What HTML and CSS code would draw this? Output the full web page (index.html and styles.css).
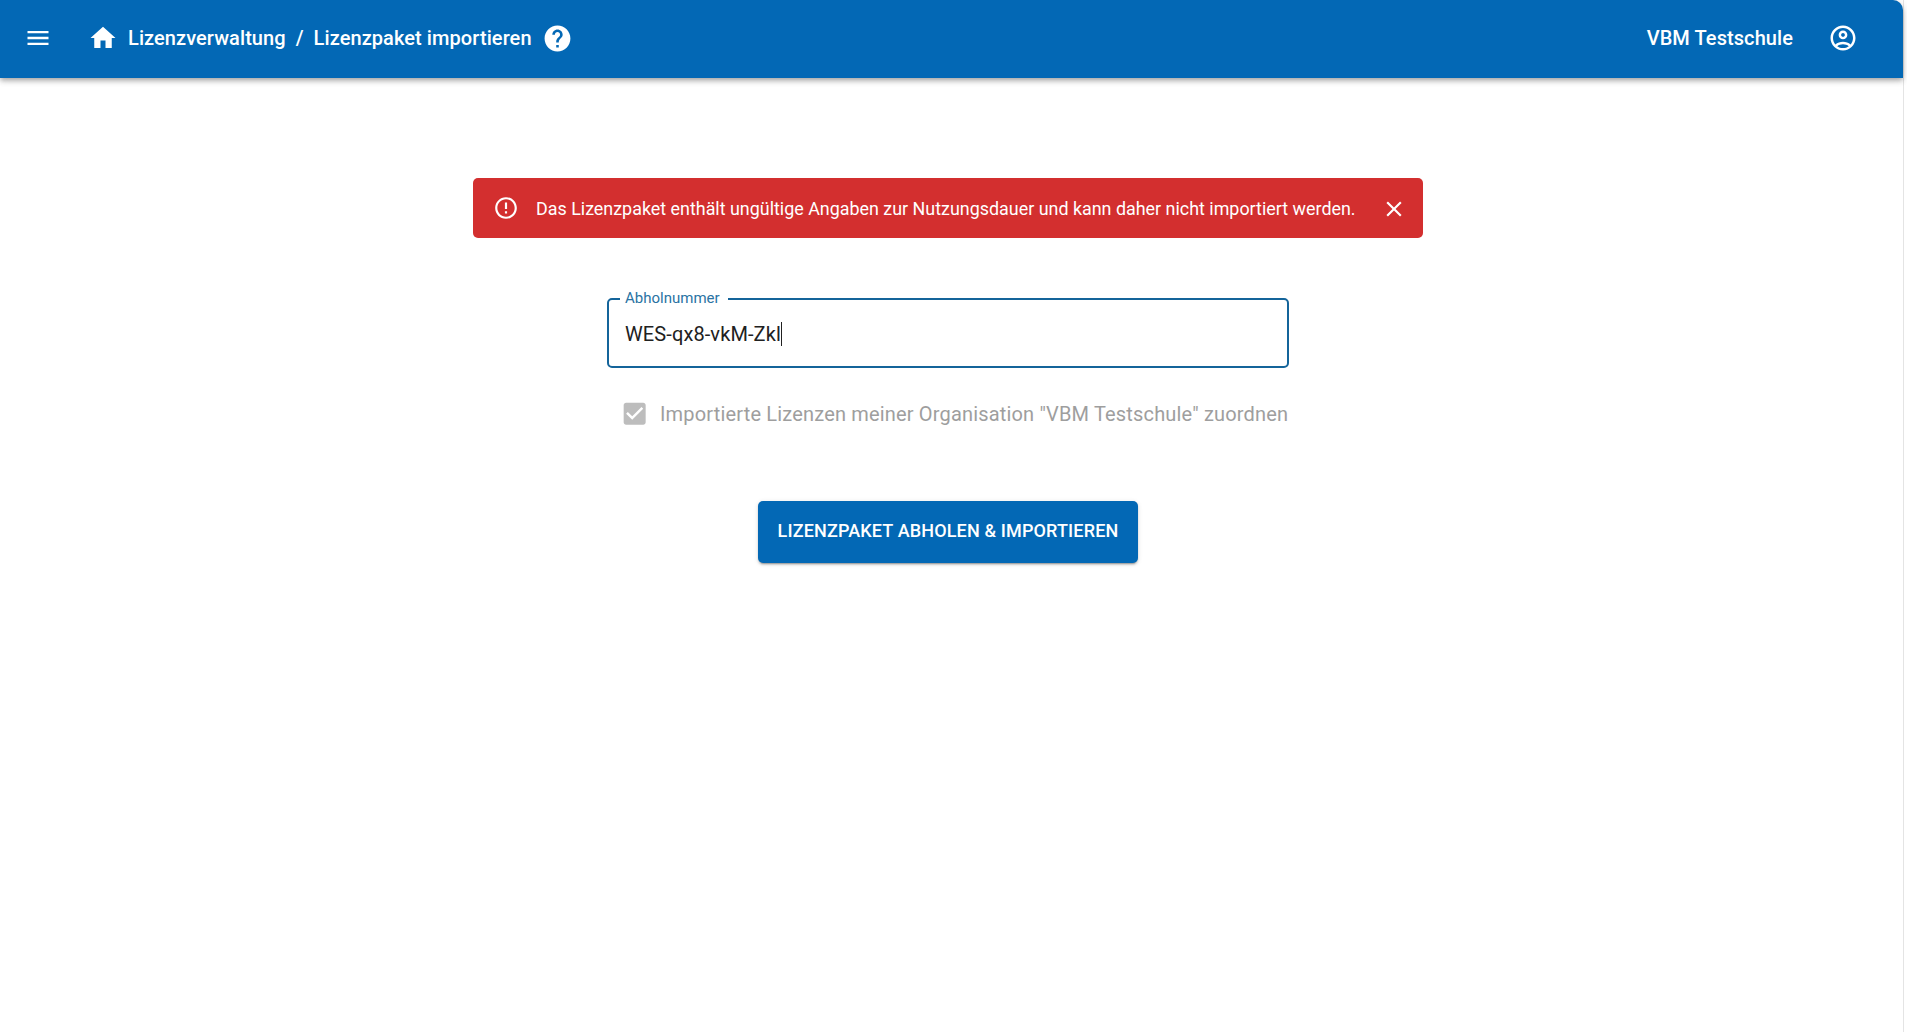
FILE: index.html
```html
<!DOCTYPE html>
<html lang="de">
<head>
  <meta charset="UTF-8" />
  <title>Lizenzpaket importieren</title>
  <link rel="stylesheet" href="styles.css">
</head>
<body>
  <div class="page">
    <header class="topbar">
      <button class="icon-btn menu-btn" aria-label="Menü">
        <svg viewBox="0 0 24 24" width="28" height="28"><path d="M3 18h18v-2H3v2zm0-5h18v-2H3v2zm0-7v2h18V6H3z"/></svg>
      </button>
      <svg class="home-icon" viewBox="0 0 24 24" width="30" height="30"><path d="M10 20v-6h4v6h5v-8h3L12 3 2 12h3v8z"/></svg>
      <nav class="crumbs">
        <span>Lizenzverwaltung</span>
        <span class="crumb-sep">/</span>
        <span>Lizenzpaket importieren</span>
      </nav>
      <svg class="help-icon" viewBox="0 0 24 24" width="31" height="31"><path d="M12 2C6.48 2 2 6.48 2 12s4.48 10 10 10 10-4.48 10-10S17.52 2 12 2zm1 17h-2v-2h2v2zm2.07-7.75l-.9.92C13.45 12.9 13 13.5 13 15h-2v-.5c0-1.1.45-2.1 1.17-2.83l1.24-1.26c.37-.36.59-.86.59-1.41 0-1.1-.9-2-2-2s-2 .9-2 2H8c0-2.21 1.79-4 4-4s4 1.79 4 4c0 .88-.36 1.68-.93 2.25z"/></svg>
      <div class="topbar-right">
        <span class="org-name">VBM Testschule</span>
        <svg class="user-icon" viewBox="0 0 24 24" width="30" height="30"><path d="M12 2C6.48 2 2 6.48 2 12s4.48 10 10 10 10-4.48 10-10S17.52 2 12 2zM7.35 18.5C8.66 17.56 10.26 17 12 17s3.34.56 4.65 1.5c-1.31.94-2.91 1.5-4.65 1.5s-3.34-.56-4.65-1.5zm10.79-1.38C16.45 15.8 14.32 15 12 15s-4.45.8-6.14 2.12C4.7 15.73 4 13.95 4 12c0-4.42 3.58-8 8-8s8 3.58 8 8c0 1.95-.7 3.73-1.86 5.12z"/><path d="M12 6c-1.93 0-3.5 1.57-3.5 3.5S10.07 13 12 13s3.5-1.57 3.5-3.5S13.93 6 12 6zm0 5c-.83 0-1.5-.67-1.5-1.5S11.17 8 12 8s1.5.67 1.5 1.5S12.83 11 12 11z"/></svg>
      </div>
    </header>

    <main class="content">
      <div class="alert">
        <svg class="alert-icon" viewBox="0 0 24 24" width="26" height="26"><path d="M11 15h2v2h-2zm0-8h2v6h-2zm.99-5C6.47 2 2 6.48 2 12s4.47 10 9.99 10C17.52 22 22 17.52 22 12S17.52 2 11.99 2zM12 20c-4.42 0-8-3.58-8-8s3.58-8 8-8 8 3.58 8 8-3.58 8-8 8z"/></svg>
        <span class="alert-text">Das Lizenzpaket enthält ungültige Angaben zur Nutzungsdauer und kann daher nicht importiert werden.</span>
        <svg class="alert-close" viewBox="0 0 24 24" width="26" height="26"><path d="M19 6.41L17.59 5 12 10.59 6.41 5 5 6.41 10.59 12 5 17.59 6.41 19 12 13.41 17.59 19 19 17.59 13.41 12z"/></svg>
      </div>

      <fieldset class="field">
        <legend>Abholnummer</legend>
        <div class="field-value">WES-qx8-vkM-Zkl<span class="caret"></span></div>
      </fieldset>

      <label class="check-row">
        <svg class="check-box" viewBox="0 0 24 24" width="29.33" height="29.33"><path d="M19 3H5c-1.11 0-2 .9-2 2v14c0 1.1.89 2 2 2h14c1.11 0 2-.9 2-2V5c0-1.1-.89-2-2-2zm-9 14l-5-5 1.41-1.41L10 14.17l7.59-7.59L19 8l-9 9z"/></svg>
        <span class="check-label">Importierte Lizenzen meiner Organisation "VBM Testschule" zuordnen</span>
      </label>

      <button class="btn-primary">Lizenzpaket abholen &amp; importieren</button>
    </main>
  </div>
</body>
</html>
```

FILE: styles.css
```css
html, body {
  height: 100%;
}

body {
  margin: 0;
  background: #fff;
  font-family: Roboto, 'Liberation Sans', sans-serif;
  color: #212121;
  overflow: hidden;
}

.page {
  box-sizing: border-box;
  width: 1904px;
  height: 100%;
  border-right: 1px solid #e4e4e4;
}

.topbar {
  box-sizing: border-box;
  display: flex;
  align-items: center;
  height: 78px;
  padding-bottom: 2px;
  background: #0368b5;
  color: #fff;
  border-top-right-radius: 10px;
  box-shadow: 0 2px 4px -1px rgba(0,0,0,.2), 0 4px 5px rgba(0,0,0,.14), 0 1px 10px rgba(0,0,0,.12);
  font-size: 20px;
  font-weight: 500;
  letter-spacing: .08px;
}

.topbar svg {
  fill: #fff;
  flex: none;
}

.icon-btn {
  display: flex;
  padding: 0;
  border: none;
  background: none;
  cursor: pointer;
}

.menu-btn {
  margin-left: 24px;
}

.home-icon {
  margin-left: 36px;
}

.crumbs {
  display: flex;
  margin-left: 10px;
}

.crumb-sep {
  margin: 0 10px;
}

.help-icon {
  margin-left: 10px;
}

.topbar-right {
  display: flex;
  align-items: center;
  margin-left: auto;
  margin-right: 45px;
}

.user-icon {
  margin-left: 35px;
}

.content {
  display: flex;
  flex-direction: column;
  align-items: center;
  width: 1896px;
  padding-top: 100px;
}

.alert {
  box-sizing: border-box;
  display: flex;
  align-items: center;
  width: 950px;
  height: 60px;
  padding: 0 16px 0 20px;
  background: #d32f2f;
  color: #fff;
  border-radius: 5px;
  font-size: 17.9px;
}

.alert svg {
  fill: #fff;
  flex: none;
}

.alert-text {
  margin-left: 17px;
}

.alert-close {
  margin-left: auto;
  margin-top: 2px;
}

.field {
  box-sizing: border-box;
  width: 682px;
  height: 78px;
  margin: 52px 0 0;
  padding: 0 16px;
  border: 2px solid #14649a;
  border-radius: 5px;
}

.field legend {
  padding: 0 8px 2px 5px;
  margin-left: -5px;
  font-size: 15px;
  line-height: 16px;
  color: #2a73a3;
}

.field-value {
  display: flex;
  align-items: center;
  height: 51px;
  font-size: 20px;
  letter-spacing: .1px;
  color: #212121;
}

.caret {
  width: 1px;
  height: 24px;
  background: #212121;
}

.check-row {
  box-sizing: border-box;
  display: flex;
  align-items: center;
  width: 682px;
  height: 30px;
  margin-top: 31px;
  padding-left: 12.5px;
}

.check-box {
  flex: none;
  fill: #bdbdbd;
}

.check-label {
  margin-left: 11.17px;
  font-size: 20px;
  letter-spacing: .17px;
  color: #9e9e9e;
  white-space: nowrap;
}

.btn-primary {
  box-sizing: border-box;
  width: 380px;
  height: 62px;
  margin-top: 72px;
  padding: 0 0 4px;
  background: #0368b5;
  color: #fff;
  border: none;
  border-radius: 5px;
  box-shadow: 0 3px 1px -2px rgba(0,0,0,.2), 0 2px 2px rgba(0,0,0,.14), 0 1px 5px rgba(0,0,0,.12);
  font-family: inherit;
  font-size: 18px;
  font-weight: 500;
  letter-spacing: .15px;
  text-transform: uppercase;
  cursor: pointer;
}
```
